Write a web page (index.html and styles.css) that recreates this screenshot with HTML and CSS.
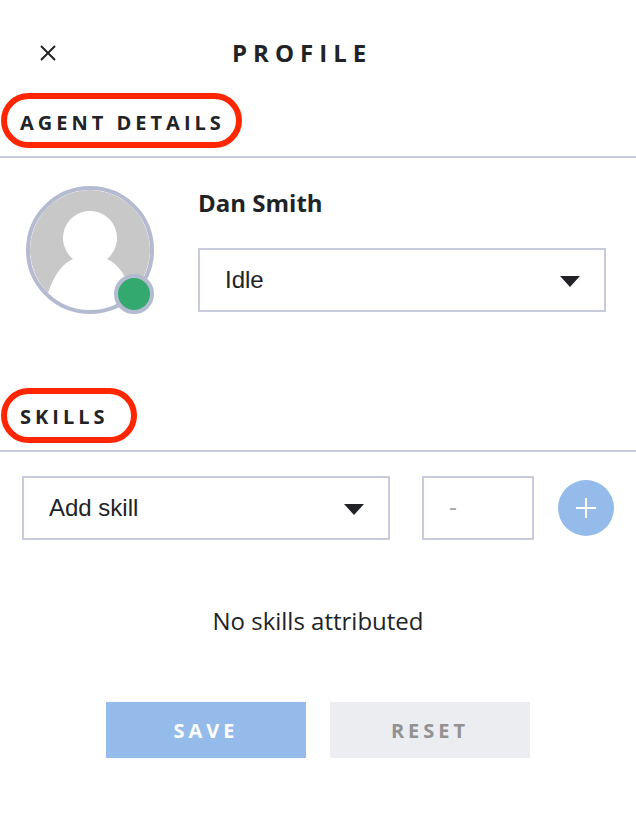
FILE: index.html
```html
<!DOCTYPE html>
<html lang="en">

<head>
    <meta charset="UTF-8">
    <meta name="viewport" content="width=device-width, initial-scale=1.0">
    <title>Profile</title>
    <link rel="stylesheet" href="styles.css">
</head>

<body>

    <!-- Header -->
    <header class="top-bar">
        <button class="close-button" aria-label="Close">
            <svg width="16" height="16" viewBox="0 0 16 16">
                <path d="M1 1L15 15M15 1L1 15" stroke="#222326" stroke-width="2" fill="none" />
            </svg>
        </button>
        <h1>PROFILE</h1>
    </header>

    <!-- Agent details -->
    <section class="agent-section">
        <div class="section-title">
            <h2>AGENT DETAILS</h2>
            <span class="highlight highlight-agent"></span>
        </div>
        <div class="agent-row">
            <div class="avatar">
                <svg width="120" height="120" viewBox="0 0 120 120">
                    <circle cx="60" cy="60" r="60" fill="#c8c8c8" />
                    <path d="M60 21A27 27 0 0 1 77 69Q93 76 102 103A60 60 0 0 1 18 103Q27 76 43 69A27 27 0 0 1 60 21Z" fill="#fff" />
                </svg>
                <span class="status-dot"></span>
            </div>
            <div class="agent-info">
                <p class="agent-name">Dan Smith</p>
                <div class="select-box">
                    <select id="status">
                        <option>Idle</option>
                        <option>Busy</option>
                    </select>
                </div>
            </div>
        </div>
    </section>

    <!-- Skills -->
    <section class="skills-section">
        <div class="section-title">
            <h2>SKILLS</h2>
            <span class="highlight highlight-skills"></span>
        </div>
        <div class="skill-form">
            <div class="select-box skill-select">
                <select id="skill">
                    <option>Add skill</option>
                </select>
            </div>
            <input type="text" class="skill-level" placeholder="-">
            <button class="add-button" aria-label="Add">
                <svg width="20" height="20" viewBox="0 0 20 20">
                    <path d="M10 0V20M0 10H20" stroke="#fff" stroke-width="2" fill="none" />
                </svg>
            </button>
        </div>
        <p class="empty-message">No skills attributed</p>
    </section>

    <!-- Buttons -->
    <div class="button-container">
        <button class="save-button">SAVE</button>
        <button class="reset-button">RESET</button>
    </div>

</body>

</html>
```

FILE: styles.css
```css
body {
    font-family: 'Open Sans', sans-serif;
    background-color: white;
    color: #222326;
    margin: 0;
    padding: 0;
}

/* Header */
.top-bar {
    display: flex;
    align-items: center;
    height: 56px;
    padding: 25px 0 0 40px;
}

.close-button {
    display: flex;
    padding: 0;
    border: none;
    background: none;
    cursor: pointer;
}

h1 {
    margin: -2px 0 0 176px;
    font-size: 24px;
    font-weight: 700;
    letter-spacing: 6px;
}

/* Section titles */
.section-title {
    position: relative;
    height: 75px;
    box-sizing: border-box;
    padding: 0 0 0 20px;
    border-bottom: 2px solid #c8cbdc;
}

h2 {
    margin: 0;
    font-size: 20px;
    line-height: 24px;
    font-weight: 700;
    letter-spacing: 4px;
}

.agent-section .section-title {
    height: 77px;
}

.agent-section h2 {
    padding-top: 30px;
}

.skills-section h2 {
    padding-top: 28px;
}

.highlight {
    position: absolute;
    box-sizing: border-box;
    border: 6px solid #ff2600;
    border-radius: 28px;
    left: 1px;
    height: 55px;
}

.highlight-agent {
    top: 12px;
    width: 241px;
}

.highlight-skills {
    top: 11px;
    width: 136px;
}

/* Agent details */
.agent-section {
    height: 296px;
    box-sizing: border-box;
}

.agent-row {
    display: flex;
    padding: 28px 30px 0 26px;
}

.avatar {
    position: relative;
    width: 128px;
    height: 128px;
    box-sizing: border-box;
    border: 4px solid #b4bad0;
    border-radius: 50%;
}

.avatar svg {
    display: block;
    border-radius: 50%;
}

.status-dot {
    position: absolute;
    right: -4px;
    bottom: -4px;
    width: 40px;
    height: 40px;
    box-sizing: border-box;
    background-color: #34a96f;
    border: 4px solid #b4bad0;
    border-radius: 50%;
}

.agent-info {
    flex: 1;
    margin-left: 44px;
}

.agent-name {
    margin: -1px 0 27px 0;
    font-size: 24px;
    line-height: 36px;
    font-weight: 700;
}

/* Form controls */
.select-box {
    position: relative;
    height: 64px;
}

.select-box::after {
    content: "";
    position: absolute;
    right: 26px;
    top: 28px;
    border-left: 10px solid transparent;
    border-right: 10px solid transparent;
    border-top: 11px solid #222326;
    pointer-events: none;
}

select {
    appearance: none;
    width: 100%;
    height: 100%;
    padding: 0 0 2px 25px;
    border: 2px solid #c8cbdc;
    border-radius: 0;
    background-color: white;
    color: #222326;
    font-family: 'Liberation Sans', sans-serif;
    font-size: 24px;
}

.skill-form {
    display: flex;
    align-items: center;
    padding: 24px 22px 0 22px;
}

.skill-select {
    width: 368px;
}

.skill-level {
    width: 112px;
    height: 64px;
    box-sizing: border-box;
    margin-left: 32px;
    padding: 0 0 2px 25px;
    border: 2px solid #c8cbdc;
    border-radius: 0;
    font-family: 'Liberation Sans', sans-serif;
    font-size: 24px;
}

.skill-level::placeholder {
    color: #a6a8b0;
}

.add-button {
    display: flex;
    align-items: center;
    justify-content: center;
    width: 56px;
    height: 56px;
    margin-left: 24px;
    padding: 0;
    border: none;
    border-radius: 50%;
    background-color: #94bbea;
    cursor: pointer;
}

.empty-message {
    margin: 63px 0 0 0;
    font-size: 24px;
    line-height: 36px;
    text-align: center;
}

/* Buttons */
.button-container {
    display: flex;
    justify-content: center;
    gap: 24px;
    margin-top: 63px;
}

.button-container button {
    width: 200px;
    height: 56px;
    border: none;
    font-family: 'Open Sans', sans-serif;
    font-size: 20px;
    font-weight: 700;
    letter-spacing: 4px;
    cursor: pointer;
}

.save-button {
    background-color: #94bbea;
    color: white;
}

.reset-button {
    background-color: #ecedf1;
    color: #929292;
}
```
